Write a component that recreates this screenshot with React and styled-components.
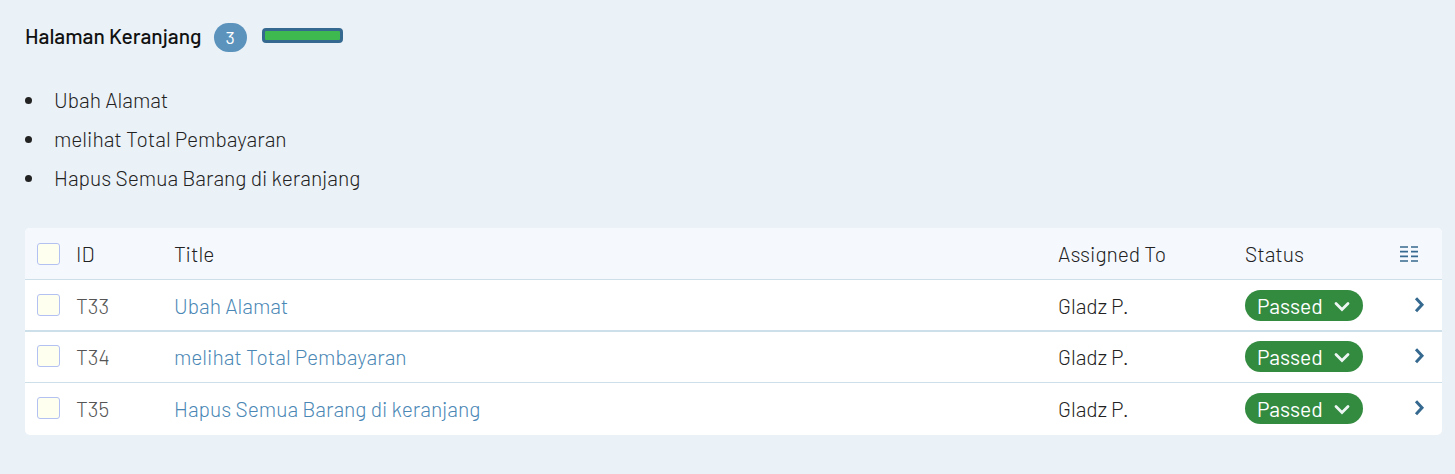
import React from "react";
import styled, { createGlobalStyle } from "styled-components";

const GlobalStyle = createGlobalStyle`
  * { box-sizing: border-box; }
  body {
    margin: 0;
    background: #eaf1f7;
    color: #222;
    font: 300 21px/28px Barlow, Roboto, sans-serif;
  }
`;

const Section = styled.main`
  padding: 23px 13px 32px 25px;
`;

const Header = styled.header`
  display: flex;
  align-items: flex-start;
`;

const Heading = styled.h1`
  margin: 0 12px 0 0;
  color: #111;
  font-size: 21px;
  font-weight: 500;
  line-height: 26px;
`;

const CountBadge = styled.span`
  width: 33px;
  height: 29px;
  margin-right: 15px;
  border-radius: 15px;
  background: #5b93bd;
  color: #fff;
  font-size: 18px;
  font-weight: 400;
  line-height: 29px;
  text-align: center;
`;

const Progress = styled.div`
  width: 81px;
  height: 15px;
  margin-top: 5px;
  border: 3px solid #36698f;
  border-radius: 4px;
  background: #3eb94f;
`;

const ScenarioList = styled.ul`
  margin: 29px 0 30px;
  padding: 0;
  list-style: none;
`;

const Scenario = styled.li`
  display: flex;
  gap: 22px;
  padding-bottom: 2px;
  line-height: 37px;

  &::before {
    content: "";
    width: 7px;
    height: 7px;
    margin-top: 16px;
    border-radius: 50%;
    background: #222;
  }
`;

const CaseTable = styled.table`
  width: 100%;
  table-layout: fixed;
  border-collapse: separate;
  border-spacing: 0;
  border-radius: 5px;
  overflow: hidden;
  background: #fff;
`;

const Column = styled.col`
  width: ${({ $width }) => ($width ? `${$width}px` : "auto")};
`;

const HeadCell = styled.th`
  height: 52px;
  padding: ${({ $inset }) => ($inset ? "0 0 0 12px" : "0")};
  border-bottom: 1px solid #cddfe9;
  background: #f5f9fe;
  font-weight: 300;
  text-align: left;
`;

const Row = styled.tr`
  height: ${({ $line }) => ($line === 1 ? "51px" : "52px")};

  & > td {
    padding-bottom: ${({ $line }) => ($line === 2 ? "0" : "2px")};
    border-bottom: ${({ $line }) => $line}px solid #cddfe9;
  }
`;

const Cell = styled.td`
  padding: 2px 0 0;
  color: ${({ $muted }) => ($muted ? "#555" : "#222")};
`;

const ControlCell = styled.td`
  padding: ${({ $inset }) => ($inset ? "0 0 0 12px" : "0")};
`;

const Checkbox = styled.input.attrs({ type: "checkbox" })`
  appearance: none;
  display: block;
  width: 23px;
  height: 22px;
  margin: 0;
  border: 1px solid #b3c0f2;
  border-radius: 3px;
  background: #fffff0;

  &:checked {
    background: #5b93bd;
  }
`;

const CaseLink = styled.a`
  color: #4a87b5;
  text-decoration: none;
`;

const StatusPill = styled.div`
  position: relative;
  width: 118px;
  height: 31px;
  color: #fff;
`;

const StatusSelect = styled.select`
  appearance: none;
  display: block;
  width: 100%;
  height: 100%;
  padding: 2px 36px 0 12px;
  border: 0;
  border-radius: 16px;
  background: #338b40;
  color: inherit;
  font: inherit;
  font-weight: 400;
`;

const PillChevron = styled.svg`
  position: absolute;
  top: 11px;
  right: 13px;
  pointer-events: none;
`;

const IconButton = styled.button`
  display: flex;
  align-items: center;
  padding: ${({ $inset }) => ($inset ? "0 0 0 14px" : "0")};
  border: 0;
  background: none;
  color: #36698f;
`;

const cases = [
  { id: "T33", title: "Ubah Alamat", line: 2 },
  { id: "T34", title: "melihat Total Pembayaran", line: 1 },
  { id: "T35", title: "Hapus Semua Barang di keranjang", line: 0 },
];

function StatusPicker({ label }) {
  return (
    <StatusPill>
      <StatusSelect aria-label={label} defaultValue="Passed">
        <option>Passed</option>
      </StatusSelect>
      <PillChevron width="16" height="11" viewBox="0 0 16 11" fill="none" aria-hidden="true">
        <path d="M2 2.5 8 8.5 14 2.5" stroke="#eef6f4" strokeWidth="2.8" strokeLinecap="round" />
      </PillChevron>
    </StatusPill>
  );
}

function ColumnsIcon() {
  return (
    <svg width="18" height="16" viewBox="0 0 18 16" aria-hidden="true">
      <path
        d="M0 1h8M11 1h7M0 5.7h8M11 5.7h7M0 10.3h8M11 10.3h7M0 15h8M11 15h7"
        stroke="currentColor"
        strokeWidth="1.7"
      />
    </svg>
  );
}

function ChevronRight() {
  return (
    <svg width="11" height="16" viewBox="0 0 11 16" fill="none" aria-hidden="true">
      <path d="M2 1.2 8 7.7 2 14.2" stroke="currentColor" strokeWidth="3" />
    </svg>
  );
}

export default function App() {
  return (
    <Section>
      <GlobalStyle />
      <Header>
        <Heading>Halaman Keranjang</Heading>
        <CountBadge>3</CountBadge>
        <Progress role="progressbar" aria-label="Passed" aria-valuenow={100} />
      </Header>
      <ScenarioList>
        {cases.map((c) => (
          <Scenario key={c.id}>{c.title}</Scenario>
        ))}
      </ScenarioList>
      <CaseTable>
        <colgroup>
          <Column $width={51} />
          <Column $width={98} />
          <Column />
          <Column $width={187} />
          <Column $width={155} />
          <Column $width={42} />
        </colgroup>
        <thead>
          <tr>
            <HeadCell $inset>
              <Checkbox aria-label="Select all" />
            </HeadCell>
            <HeadCell>ID</HeadCell>
            <HeadCell>Title</HeadCell>
            <HeadCell>Assigned To</HeadCell>
            <HeadCell>Status</HeadCell>
            <HeadCell>
              <IconButton aria-label="Columns">
                <ColumnsIcon />
              </IconButton>
            </HeadCell>
          </tr>
        </thead>
        <tbody>
          {cases.map((c) => (
            <Row key={c.id} $line={c.line}>
              <ControlCell $inset>
                <Checkbox aria-label={`Select ${c.id}`} />
              </ControlCell>
              <Cell $muted>{c.id}</Cell>
              <Cell>
                <CaseLink href={`#${c.id}`}>{c.title}</CaseLink>
              </Cell>
              <Cell>Gladz P.</Cell>
              <ControlCell>
                <StatusPicker label={`Status ${c.id}`} />
              </ControlCell>
              <ControlCell>
                <IconButton $inset aria-label={`Open ${c.id}`}>
                  <ChevronRight />
                </IconButton>
              </ControlCell>
            </Row>
          ))}
        </tbody>
      </CaseTable>
    </Section>
  );
}
